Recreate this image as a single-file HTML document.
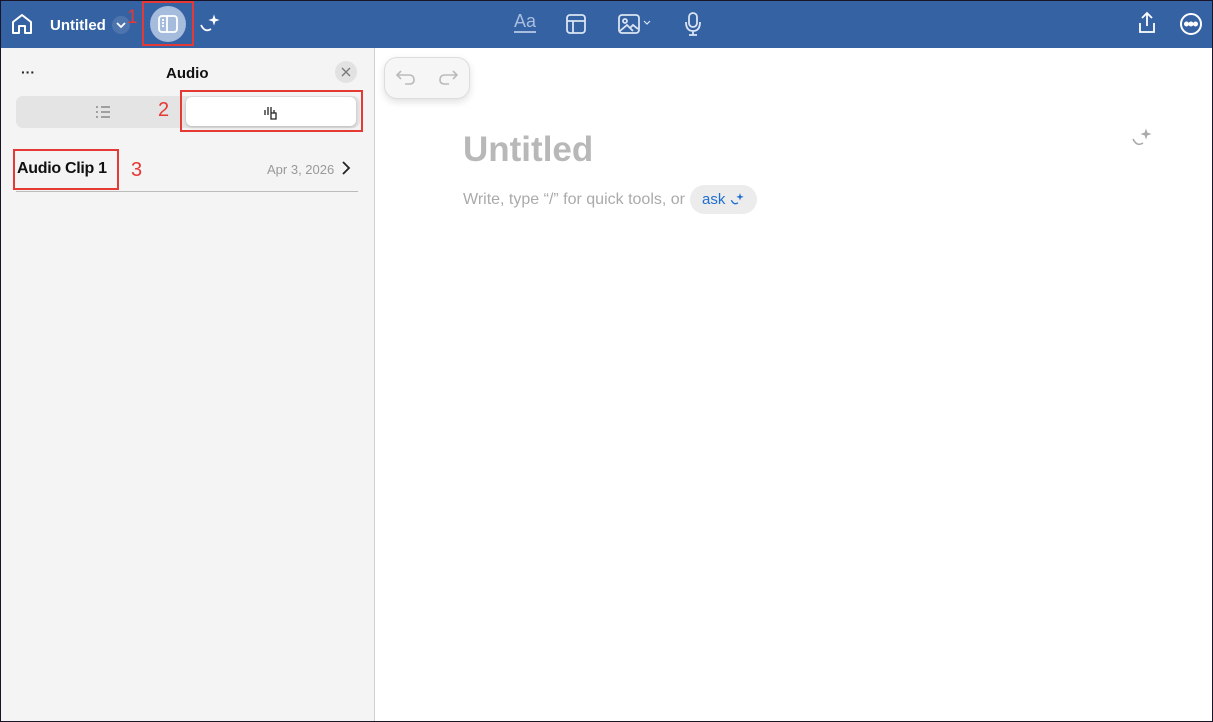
<!DOCTYPE html>
<html><head><style>
*{box-sizing:border-box;margin:0;padding:0}
body{width:1213px;height:722px;overflow:hidden;font-family:"Liberation Sans",sans-serif;background:#fff;position:relative}
.frame{position:absolute;inset:0;border:1px solid #1a1428;pointer-events:none;z-index:10}
.top{position:absolute;left:0;top:0;width:1213px;height:48px;background:#3562a3}
.side{position:absolute;left:0;top:48px;width:375px;height:674px;background:#f4f4f4;border-right:1px solid #cfcfcf}
.red{position:absolute;border:2px solid #e53935}
.abs{position:absolute}
svg{position:absolute;fill:none}
</style></head><body>
<div class="top"></div>
<svg style="left:11px;top:12px" width="22" height="24" viewBox="0 0 22 24" stroke="#fff" stroke-width="2"><path d="M2 10 L11 3 L20 10 V21 H14 V14 H8 V21 H2 Z" stroke-linejoin="round"/></svg>
<div class="abs" style="left:50px;top:17px;color:#fff;font-weight:bold;font-size:15px">Untitled</div>
<div class="abs" style="left:112px;top:16px;width:18px;height:18px;border-radius:9px;background:#4e74ad"></div>
<svg style="left:114px;top:18px" width="14" height="14" viewBox="0 0 14 14" stroke="#fff" stroke-width="1.8"><path d="M3 5 L7 9 L11 5"/></svg>
<div class="abs" style="left:127px;top:7px;color:#e53935;font-size:19px">1</div>
<div class="red" style="left:142px;top:1px;width:52px;height:45px"></div>
<div class="abs" style="left:150px;top:6px;width:36px;height:36px;border-radius:18px;background:#a6bcdd"></div>
<svg style="left:157px;top:13px" width="22" height="22" viewBox="0 0 22 22" stroke="#fff" stroke-width="1.8"><rect x="2" y="3" width="18" height="16" rx="3"/><path d="M10 3 V19 M5 7 H7 M5 10 H7 M5 13 H7"/></svg>
<svg style="left:199px;top:13px" width="24" height="22" viewBox="0 0 24 22" stroke="#fff" stroke-width="1.8"><path d="M2 12 Q6 20 12 16"/><path d="M15 3 L16 6 L19 7 L16 8 L15 11 L14 8 L11 7 L14 6 Z" fill="#fff" stroke-width="1"/></svg>
<div class="abs" style="left:514px;top:12px;color:#a8bde0;font-size:18px;border-bottom:2px solid #a8bde0;line-height:19px">Aa</div>
<svg style="left:565px;top:13px" width="22" height="22" viewBox="0 0 22 22" stroke="#dbe4f2" stroke-width="1.8"><rect x="2" y="2" width="18" height="18" rx="3"/><path d="M2 8 H20 M8 8 V20"/></svg>
<svg style="left:617px;top:13px" width="40" height="22" viewBox="0 0 40 22" stroke="#dbe4f2" stroke-width="1.8"><rect x="2" y="2" width="20" height="18" rx="3"/><circle cx="8" cy="8" r="2"/><path d="M3 18 L10 12 L16 18 M13 15 L16 12 L21 16"/><path d="M27 8 L30 11 L33 8" stroke-width="1.2"/></svg>
<svg style="left:683px;top:11px" width="20" height="26" viewBox="0 0 20 26" stroke="#dbe4f2" stroke-width="1.8"><rect x="6" y="2" width="8" height="14" rx="4"/><path d="M3 11 Q3 20 10 20 Q17 20 17 11 M10 20 V24 M6 24 H14"/></svg>
<svg style="left:1136px;top:11px" width="22" height="24" viewBox="0 0 22 24" stroke="#fff" stroke-width="1.8"><path d="M11 2 V15 M6 7 L11 2 L16 7 M4 12 V21 H18 V12"/></svg>
<svg style="left:1179px;top:12px" width="24" height="24" viewBox="0 0 24 24" stroke="#fff" stroke-width="2"><circle cx="12" cy="12" r="10"/><circle cx="7.5" cy="12" r="1.5" fill="#fff"/><circle cx="12" cy="12" r="1.5" fill="#fff"/><circle cx="16.5" cy="12" r="1.5" fill="#fff"/></svg>

<div class="side"></div>
<div class="abs" style="left:21px;top:64px;font-size:14px;font-weight:bold;color:#222">···</div>
<div class="abs" style="left:166px;top:65px;font-size:15px;font-weight:bold;color:#111">Audio</div>
<div class="abs" style="left:335px;top:61px;width:22px;height:22px;border-radius:11px;background:#e2e2e2"></div>
<svg style="left:340px;top:66px" width="12" height="12" viewBox="0 0 12 12" stroke="#777" stroke-width="1.3"><path d="M2 2 L10 10 M10 2 L2 10"/></svg>
<div class="abs" style="left:16px;top:96px;width:344px;height:32px;border-radius:7px;background:#e4e4e4"></div>
<svg style="left:95px;top:104px" width="16" height="16" viewBox="0 0 16 16" stroke="#888" stroke-width="1.5"><path d="M1 3 H3 M6 3 H15 M1 8 H3 M6 8 H15 M1 13 H3 M6 13 H15"/></svg>
<div class="abs" style="left:158px;top:99px;color:#e53935;font-size:20px">2</div>
<div class="abs" style="left:186px;top:97px;width:170px;height:29px;border-radius:6px;background:#fff;box-shadow:0 1px 3px rgba(0,0,0,.2)"></div>
<svg style="left:263px;top:104px" width="16" height="16" viewBox="0 0 16 16" stroke="#222" stroke-width="1.3"><path d="M2 6 V11 M5 3 V11 M8 3 V9 M8 9 H13 V15 H8 Z M11 6 V9"/></svg>
<div class="red" style="left:180px;top:90px;width:183px;height:42px"></div>
<div class="abs" style="left:17px;top:160px;font-size:16px;font-weight:bold;color:#111;letter-spacing:-0.3px">Audio Clip 1</div>
<div class="red" style="left:13px;top:149px;width:106px;height:41px"></div>
<div class="abs" style="left:131px;top:159px;color:#e53935;font-size:20px">3</div>
<div class="abs" style="left:267px;top:162px;font-size:13px;color:#999">Apr 3, 2026</div>
<svg style="left:340px;top:160px" width="12" height="16" viewBox="0 0 12 16" stroke="#222" stroke-width="1.8"><path d="M3 2 L9 8 L3 14"/></svg>
<div class="abs" style="left:16px;top:191px;width:342px;height:1px;background:#bbb"></div>

<div class="abs" style="left:384px;top:57px;width:86px;height:42px;border-radius:13px;background:#f6f6f6;border:1px solid #ddd;box-shadow:0 3px 8px rgba(0,0,0,.12)"></div>
<svg style="left:395px;top:69px" width="22" height="18" viewBox="0 0 22 18" stroke="#bbb" stroke-width="1.6"><path d="M6 2 L2 6 L6 10 M2 6 H14 Q19 6 19 11 Q19 15 14 15 H10"/></svg>
<svg style="left:437px;top:69px" width="22" height="18" viewBox="0 0 22 18" stroke="#bbb" stroke-width="1.6"><path d="M16 2 L20 6 L16 10 M20 6 H8 Q3 6 3 11 Q3 15 8 15 H12"/></svg>
<div class="abs" style="left:463px;top:130px;font-size:35px;font-weight:bold;color:#b8b8b8">Untitled</div>
<svg style="left:1131px;top:127px" width="24" height="22" viewBox="0 0 24 22" stroke="#aaa" stroke-width="1.6"><path d="M2 12 Q6 20 12 16"/><path d="M15 3 L16 6 L19 7 L16 8 L15 11 L14 8 L11 7 L14 6 Z" fill="#aaa" stroke-width="1"/></svg>
<div class="abs" style="left:463px;top:191px;font-size:16px;color:#aaa">Write, type “/” for quick tools, or</div>
<div class="abs" style="left:690px;top:185px;width:67px;height:29px;border-radius:15px;background:#ececec"></div>
<div class="abs" style="left:702px;top:191px;font-size:15px;color:#1f6fd0">ask</div>
<svg style="left:730px;top:192px" width="16" height="15" viewBox="0 0 24 22" stroke="#1f6fd0" stroke-width="2"><path d="M2 12 Q6 20 12 16"/><path d="M15 3 L16 6 L19 7 L16 8 L15 11 L14 8 L11 7 L14 6 Z" fill="#1f6fd0" stroke-width="1"/></svg>
<div class="frame"></div>
</body></html>
